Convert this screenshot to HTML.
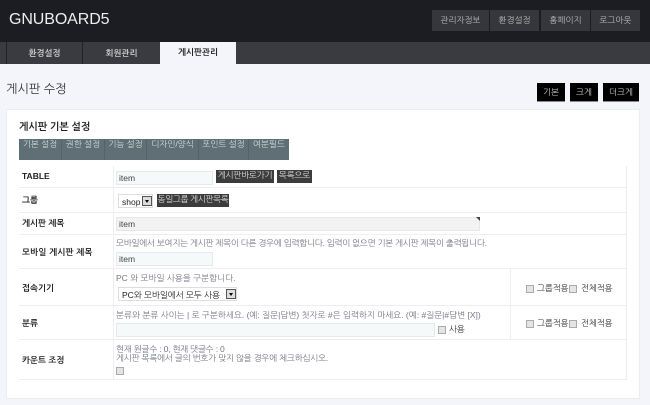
<!DOCTYPE html>
<html lang="ko"><head><meta charset="utf-8">
<style>
html,body{margin:0;padding:0;width:650px;height:405px;overflow:hidden;background:#f4f5fa;font-family:"Liberation Sans","NanumGothic","Noto Sans CJK KR",sans-serif;font-size:8.5px;color:#333}
div,span{position:absolute;box-sizing:border-box;white-space:nowrap}
.hb{top:10px;height:21px;background:#36373c;color:#bbb;line-height:21px;text-align:center}
.tab{top:43px;height:21px;background:#3a3b40;color:#ccc;font-weight:bold;line-height:21px;text-align:center}
.sz{top:83px;height:19px;background:#000;color:#ccc;line-height:18px;text-align:center;border-bottom:1px solid #888}
.st{top:139px;height:21px;color:#cdd;line-height:10px;text-align:center;border-right:1px solid #53636a}
.hl{left:19px;width:608px;height:1px;background:#eeeef0}
.th{left:22px;font-weight:bold;color:#222;line-height:12px}
.inp{height:14px;background:#f5f9fa;border:1px solid #e4eaec;color:#444;line-height:13px;padding-left:2px}
.btn{background:#3d3c3d;color:#ddd;line-height:11px;text-align:center;letter-spacing:-.2px}
.d{color:#778;line-height:11px}
.cb{width:8px;height:8px;background:#e4e4e4;border:1px solid #aaa}
.sel{background:#fff;border:1px solid #ddd;color:#222;line-height:14px;padding-left:3px}
.ar{width:10px;height:10px;background:#ddd;border:1px solid #555}
.ar:after{content:"";position:absolute;left:2px;top:3px;border:2px solid transparent;border-top:3px solid #000}
.t{color:#333;line-height:11px;letter-spacing:-.1px}
</style></head><body>
<div style="left:0;top:0;width:650px;height:42px;background:#1c1d22"></div>
<div style="left:0;top:42px;width:650px;height:22px;background:#3a3b40"></div>
<div style="left:9px;top:10px;font-size:16px;line-height:20px;color:#eee;letter-spacing:-.1px">GNUBOARD5</div>
<div class="hb" style="left:432px;width:57px">관리자정보</div>
<div class="hb" style="left:490px;width:49px">환경설정</div>
<div class="hb" style="left:541px;width:49px">홈페이지</div>
<div class="hb" style="left:591px;width:49px">로그아웃</div>
<div style="left:6px;top:42px;width:1px;height:22px;background:#222"></div>
<div class="tab" style="left:7px;width:75px">환경설정</div>
<div style="left:82px;top:42px;width:1px;height:22px;background:#222"></div>
<div class="tab" style="left:83px;width:77px">회원관리</div>
<div class="tab" style="left:160px;top:42px;height:22px;width:76px;background:#f4f5fa;color:#222">게시판관리</div>
<div style="left:6px;top:81px;font-size:12.2px;line-height:16px;color:#333">게시판 수정</div>
<div class="sz" style="left:537px;width:28px">기본</div>
<div class="sz" style="left:570px;width:28px">크게</div>
<div class="sz" style="left:603px;width:36px">더크게</div>

<div style="left:6px;top:109px;width:634px;height:290px;background:#fff;border:1px solid #eceded"></div>
<div style="left:19px;top:121px;font-weight:bold;font-size:10px;line-height:13px;color:#222">게시판 기본 설정</div>
<div style="left:19px;top:139px;width:270px;height:21px;background:#5f6f75"></div>
<div class="st" style="left:19px;width:43px">기본 설정</div>
<div class="st" style="left:62px;width:43px">권한 설정</div>
<div class="st" style="left:105px;width:42px">기능 설정</div>
<div class="st" style="left:147px;width:52px">디자인/양식</div>
<div class="st" style="left:199px;width:50px">포인트 설정</div>
<div class="st" style="left:249px;width:40px;border:0">여분필드</div>

<div style="left:113px;top:166px;width:1px;height:213px;background:#eeeef0"></div>
<div style="left:626px;top:166px;width:1px;height:213px;background:#eeeef0"></div>
<div style="left:510px;top:268px;width:1px;height:71px;background:#eeeef0"></div>
<div class="hl" style="top:187px"></div>
<div class="hl" style="top:212px"></div>
<div class="hl" style="top:234px"></div>
<div class="hl" style="top:268px"></div>
<div class="hl" style="top:305px"></div>
<div class="hl" style="top:339px"></div>
<div class="hl" style="top:379px"></div>

<div class="th" style="top:170px">TABLE</div>
<div class="th" style="top:194px">그룹</div>
<div class="th" style="top:217px">게시판 제목</div>
<div class="th" style="top:246px;letter-spacing:.2px">모바일 게시판 제목</div>
<div class="th" style="top:282px">접속기기</div>
<div class="th" style="top:317px">분류</div>
<div class="th" style="top:354px">카운트 조정</div>

<div class="inp" style="left:116px;top:171px;width:97px">item</div>
<div class="btn" style="left:216px;top:170px;width:58px;height:13px">게시판바로가기</div>
<div class="btn" style="left:277px;top:170px;width:35px;height:13px">목록으로</div>

<div class="sel" style="left:118px;top:194px;width:35px;height:14px;font-size:8.5px">shop</div>
<div class="ar" style="left:142px;top:196px"></div>
<div class="btn" style="left:157px;top:194px;width:72px;height:13px;letter-spacing:-.35px">동일그룹 게시판목록</div>

<div class="inp" style="left:116px;top:217px;width:364px;background:#f3f3f3;border-color:#e6e8e8">item</div>
<div style="left:476px;top:217px;border-top:4px solid #444;border-left:4px solid transparent"></div>

<div class="d" style="left:116px;top:238px;letter-spacing:-.24px">모바일에서 보여지는 게시판 제목이 다른 경우에 입력합니다. 입력이 없으면 기본 게시판 제목이 출력됩니다.</div>
<div class="inp" style="left:116px;top:252px;width:97px">item</div>

<div class="d" style="left:116px;top:273px">PC 와 모바일 사용을 구분합니다.</div>
<div class="sel" style="left:118px;top:287px;width:119px;height:14px;font-size:8.5px;letter-spacing:-.05px">PC와 모바일에서 모두 사용</div>
<div class="ar" style="left:226px;top:289px"></div>
<div class="cb" style="left:526px;top:285px"></div><div class="t" style="left:537px;top:283px">그룹적용</div>
<div class="cb" style="left:569px;top:285px"></div><div class="t" style="left:581px;top:283px">전체적용</div>

<div class="d" style="left:116px;top:310px">분류와 분류 사이는 | 로 구분하세요. (예: 질문|답변) 첫자로 #은 입력하지 마세요. (예: #질문|#답변 [X])</div>
<div class="inp" style="left:116px;top:323px;width:319px">&nbsp;</div>
<div class="cb" style="left:438px;top:326px"></div><div class="t" style="left:449px;top:324px">사용</div>
<div class="cb" style="left:526px;top:320px"></div><div class="t" style="left:537px;top:318px">그룹적용</div>
<div class="cb" style="left:569px;top:320px"></div><div class="t" style="left:581px;top:318px">전체적용</div>

<div class="d" style="left:116px;top:345px;line-height:9px;letter-spacing:-.2px">현재 원글수 : 0, 현재 댓글수 : 0<br>게시판 목록에서 글의 번호가 맞지 않을 경우에 체크하십시오.</div>
<div class="cb" style="left:116px;top:367px"></div>
</body></html>
